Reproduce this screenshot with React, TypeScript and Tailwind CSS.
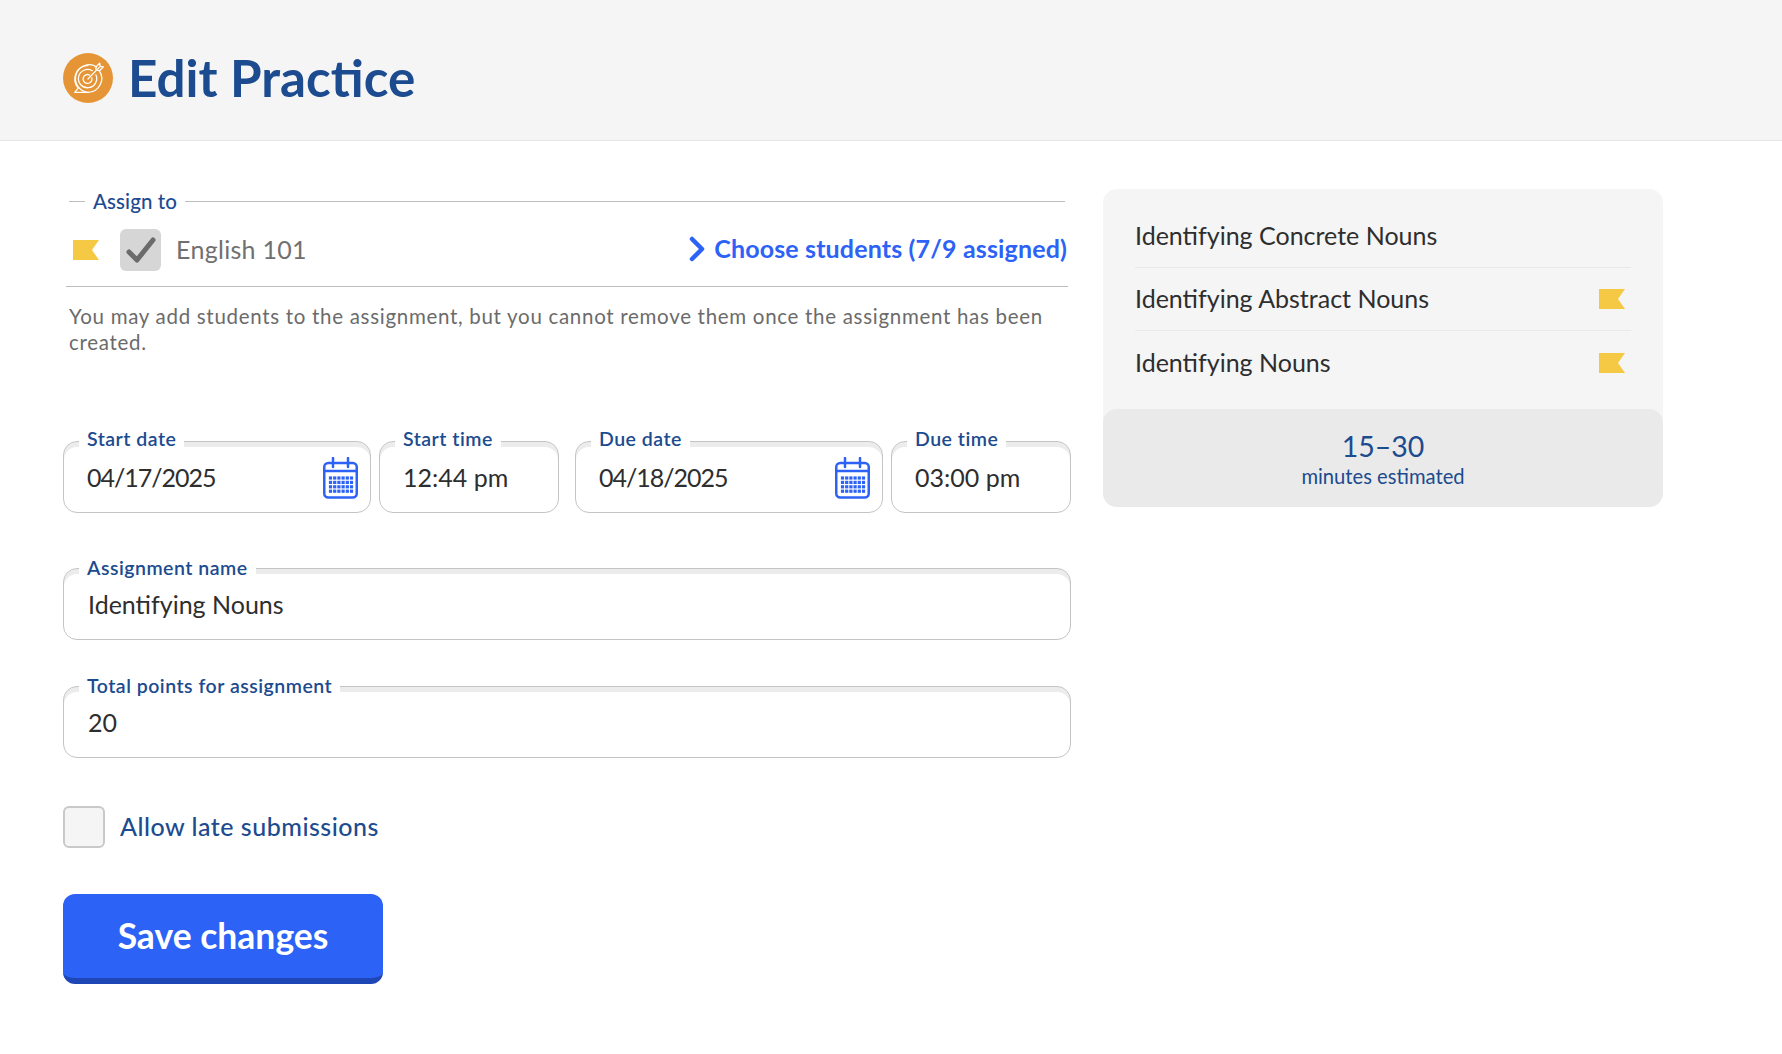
import { ReactNode } from 'react';

const Flag = () => (
  <svg width="26" height="20" viewBox="0 0 26 20" className="shrink-0">
    <path d="M0 0H26L19 10L26 20H0Z" fill="#f6c945" />
  </svg>
);

const CalendarIcon = () => {
  const cells = [];
  for (let r = 0; r < 4; r++) {
    for (let c = 0; c < 6; c++) {
      cells.push(<rect key={`${r}-${c}`} x={5.9 + c * 4.2} y={19.4 + r * 4.4} width="3.2" height="3.2" fill="#2d62f6" />);
    }
  }
  return (
    <svg width="35" height="42" viewBox="0 0 35 42" className="shrink-0">
      <rect x="1.25" y="6" width="32.5" height="34.5" rx="4" fill="none" stroke="#2d62f6" strokeWidth="2.5" />
      <path d="M1.5 14H33.5" stroke="#2d62f6" strokeWidth="2.5" />
      <path d="M10 1V10M25 1V10" stroke="#2d62f6" strokeWidth="2.5" strokeLinecap="round" />
      {cells}
    </svg>
  );
};

const TargetLogo = () => (
  <div className="flex h-[50px] w-[50px] shrink-0 items-center justify-center rounded-full bg-[#e59536]">
    <svg width="34" height="34" viewBox="0 0 32 32" fill="none" stroke="#fff" strokeWidth="1.2" strokeLinecap="round" strokeLinejoin="round">
      <path d="M24 5.5A13 13 0 1 0 16 29.5H3.5L6.8 25.5A13 13 0 0 1 16 4" />
      <path d="M26.5 9A13 13 0 0 1 16 29.5" />
      <path d="M20 9.2A8.6 8.6 0 1 0 23.4 13" />
      <path d="M17.5 13.2A4.2 4.2 0 1 0 19.6 15.8" />
      <path d="M16 17L27 5.5" />
      <path d="M23.5 5.5L27 2L27.5 5L30.5 5.5L27 9L23.5 8.5Z" />
    </svg>
  </div>
);

const Field = ({ label, value, className, icon, valueClass, labelClass }: { label: string; value: string; className: string; icon?: ReactNode; valueClass?: string; labelClass?: string }) => (
  <fieldset className={`rounded-[14px] border border-[#c4c4c4] pl-[16px] pr-[12px] shadow-[inset_0_5px_0_#ececec] ${className}`}>
    <legend className={`-ml-[1px] bg-white px-[8px] text-[19.5px] font-semibold leading-[24px] tracking-[0.5px] text-[#1c4b8f] ${labelClass ?? ''}`}>{label}</legend>
    <div className={`box-border flex h-[59px] items-center justify-between pb-[10px] pl-[7px] text-[25px] text-[#2e2e2e] ${valueClass ?? ''}`}>
      <span>{value}</span>
      {icon}
    </div>
  </fieldset>
);

const lessons = [
  { name: 'Identifying Concrete Nouns', flag: false },
  { name: 'Identifying Abstract Nouns', flag: true },
  { name: 'Identifying Nouns', flag: true },
];

export default function App() {
  return (
    <div className="min-h-screen bg-white font-['Lato',sans-serif]">
      <header className="flex h-[141px] items-center gap-[15px] border-b border-[#e6e6e6] bg-[#f5f5f5] pl-[63px] pt-[16px]">
        <TargetLogo />
        <h1 className="text-[51.2px] font-bold leading-none text-[#1c4b8f]">Edit Practice</h1>
      </header>

      <main className="flex gap-[32px] pl-[63px] pt-[48px]">
        <div className="flex w-[1008px] flex-col">
          <div className="flex items-center gap-[8px] pl-[6px] pr-[6px]">
            <div className="h-px w-[16px] bg-[#bdbdbd]" />
            <span className="text-[20.5px] font-medium leading-[24px] tracking-[0.1px] text-[#1c4b8f]">Assign to</span>
            <div className="h-px flex-1 bg-[#bdbdbd]" />
          </div>

          <div className="mx-[3px] mt-[16px] flex items-center border-b border-[#bdbdbd] pb-[15px]">
            <div className="ml-[7px]"><Flag /></div>
            <div className="ml-[21px] flex h-[42px] w-[41px] items-center justify-center rounded-[6px] bg-[#d6d6d6]">
              <svg width="30" height="26" viewBox="0 0 30 26" fill="none" stroke="#6b6b6b" strokeWidth="5" strokeLinecap="round" strokeLinejoin="round">
                <path d="M3 15L11 23L27 3" />
              </svg>
            </div>
            <span className="ml-[15px] text-[25px] tracking-[0.3px] text-[#707070]">English 101</span>
            <a className="-mt-[2px] ml-auto mr-[1px] flex items-center gap-[8px] text-[25px] font-bold tracking-[0.15px] text-[#2d62f6]">
              <svg width="18" height="26" viewBox="0 0 18 26" fill="none" stroke="#2d62f6" strokeWidth="4.5" strokeLinecap="round" strokeLinejoin="round">
                <path d="M4 3L14 13L4 23" />
              </svg>
              Choose students (7/9 assigned)
            </a>
          </div>

          <p className="mt-[16px] pl-[6px] pr-[20px] text-[20.5px] leading-[26px] tracking-[0.7px] text-[#6b6b6b]">
            You may add students to the assignment, but you cannot remove them once the assignment has been created.
          </p>

          <div className="mt-[74px] flex">
            <Field label="Start date" value="04/17/2025" className="w-[308px]" labelClass="-translate-y-[2px]" valueClass="tracking-[-1px]" icon={<CalendarIcon />} />
            <Field label="Start time" value="12:44 pm" className="ml-[8px] w-[180px]" labelClass="-translate-y-[2px]" />
            <Field label="Due date" value="04/18/2025" className="ml-[16px] w-[308px]" labelClass="-translate-y-[2px]" valueClass="tracking-[-1px]" icon={<CalendarIcon />} />
            <Field label="Due time" value="03:00 pm" className="ml-[8px] w-[180px]" labelClass="-translate-y-[2px]" />
          </div>

          <Field label="Assignment name" value="Identifying Nouns" className="mt-[43px] w-full" valueClass="pl-[8px]" />
          <Field label="Total points for assignment" value="20" className="mt-[34px] w-full" valueClass="pl-[8px]" />

          <div className="mt-[48px] flex items-center">
            <div className="h-[42px] w-[42px] rounded-[6px] border-2 border-[#c9c9c9] bg-[#f5f5f5]" />
            <span className="ml-[15px] text-[25px] font-medium tracking-[0.5px] text-[#1c4b8f]">Allow late submissions</span>
          </div>

          <button className="mt-[46px] h-[90px] w-[320px] rounded-[12px] border-b-[6px] border-[#1f46b5] bg-[#2d62f6] text-[35.5px] font-bold text-white">
            Save changes
          </button>
        </div>

        <aside className="h-[318px] w-[560px] rounded-[14px] bg-[#f5f5f5]">
          <ul className="h-[220px] px-[32px] pt-[16px]">
            {lessons.map((l, i) => (
              <li key={l.name} className={`flex h-[63px] items-center justify-between pr-[6px] text-[25px] text-[#2e2e2e] ${i < 2 ? 'border-b border-[#e9e9e9]' : ''}`}>
                {l.name}
                {l.flag && <Flag />}
              </li>
            ))}
          </ul>
          <div className="flex h-[98px] flex-col items-center justify-center rounded-[14px] bg-[#eaeaea] text-[#1c4b8f]">
            <span className="text-[28.5px] leading-[36px]">15–30</span>
            <span className="text-[20.2px] leading-[24px]">minutes estimated</span>
          </div>
        </aside>
      </main>
    </div>
  );
}
